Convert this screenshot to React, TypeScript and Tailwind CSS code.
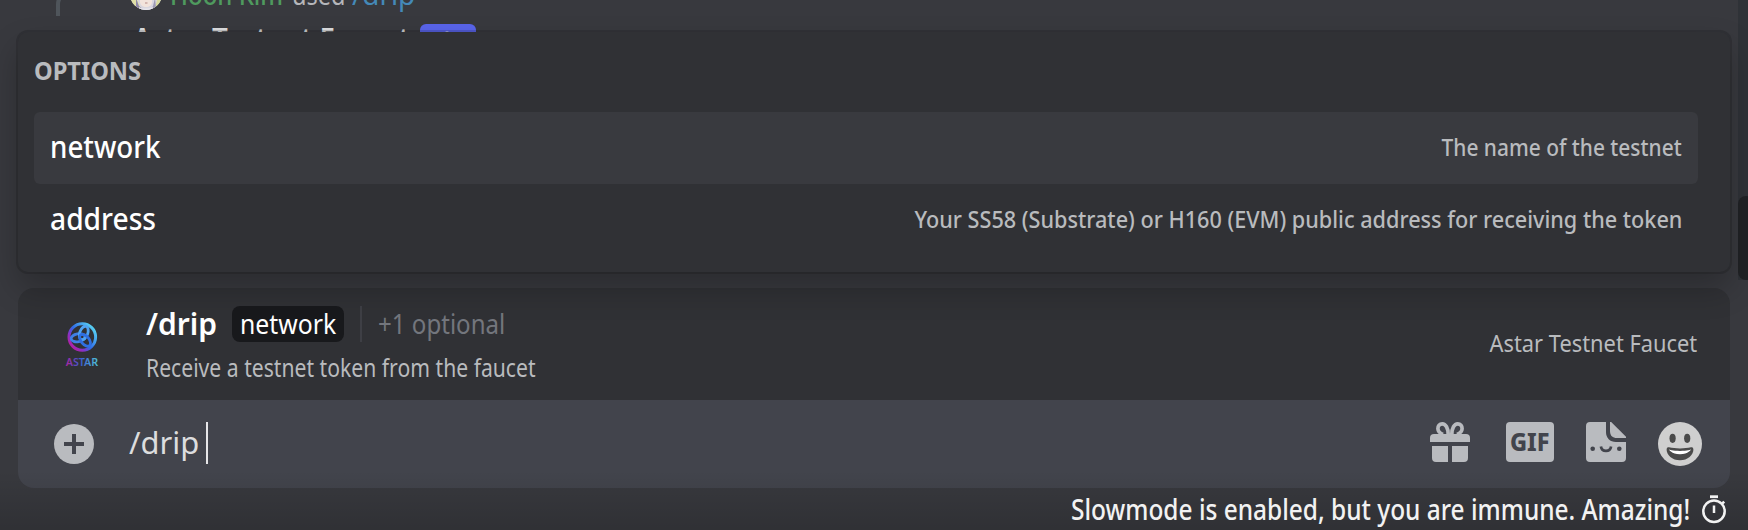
import type { ReactNode } from "react";

const options = [
  {
    name: "network",
    nameClass: "scale-x-[0.925]",
    description: "The name of the testnet",
    descriptionClass: "scale-x-[0.871]",
    active: true,
  },
  {
    name: "address",
    nameClass: "scale-x-[0.94]",
    description: "Your SS58 (Substrate) or H160 (EVM) public address for receiving the token",
    descriptionClass: "scale-x-[0.902]",
    active: false,
  },
];

function ReplyLine() {
  return (
    <div className="-mt-[22px] flex h-8 items-center pl-14">
      <div className="mt-[14px] h-6 w-[66px] shrink-0 self-start rounded-tl-xl border-l-4 border-t-4 border-[#4f555b]" />
      <svg className="ml-2 h-8 w-8 shrink-0" viewBox="0 0 32 32">
        <clipPath id="avatar">
          <circle cx="16" cy="16" r="16" />
        </clipPath>
        <g clipPath="url(#avatar)">
          <rect width="32" height="32" fill="#d9d6df" />
          <path d="M0 18h6l3 8 3 6H0z" fill="#e0e0a6" />
          <path d="M32 18h-4l-2 8-4 6h10z" fill="#d8da9c" />
          <path d="M6 20l3 8 5 4-8-1z" fill="#8d86a8" />
          <path d="M25 20l-2 8-3 4 6-2z" fill="#9c98b4" />
          <path d="M10 18h12v6c0 3-3 5-6 5s-6-2-6-5z" fill="#f3e4dc" />
          <path d="M15 25h2.500" stroke="#b78a86" strokeWidth="1" />
          <path d="M9 29c4 2 10 2 14 0v3H9z" fill="#e9e7ec" />
        </g>
      </svg>
      <div className="ml-2 w-[122px] shrink-0 pt-[3px]">
        <span className="inline-block origin-left scale-x-[0.89] text-[27px] font-medium text-[#4f9a5e]">Hoon Kim</span>
      </div>
      <div className="w-[60px] shrink-0 pt-[3px]">
        <span className="inline-block origin-left scale-x-[0.87] text-[27px] text-[#b5b6ba]">used</span>
      </div>
      <span className="inline-block origin-left scale-x-[1.03] pt-[3px] text-[27px] text-[#4489b8]">/drip</span>
    </div>
  );
}

function GiftIcon() {
  return (
    <svg className="h-10 w-10" viewBox="0 0 40 40" fill="#b9bbbf">
      <path d="M4 12h32a4 4 0 0 1 4 4v4H0v-4a4 4 0 0 1 4-4z" />
      <path d="M2 24h16v16H6a4 4 0 0 1-4-4zM22 24h16v12a4 4 0 0 1-4 4H22z" />
      <path
        d="M18.200 12.500C18.200 6 15.700 1.900 12.300 1.900C9.500 1.900 7.800 4 7.900 6.700C8 9.500 10 11.300 13 12.500M21.800 12.500C21.800 6 24.300 1.900 27.700 1.900C30.500 1.900 32.200 4 32.100 6.700C32 9.500 30 11.300 27 12.500"
        fill="none"
        stroke="#b9bbbf"
        strokeWidth="3.700"
      />
    </svg>
  );
}

function GifIcon() {
  return (
    <svg className="h-10 w-12" viewBox="0 0 48 40">
      <rect width="48" height="40" rx="4" fill="#b9bbbf" />
      <text
        x="4"
        y="28.700"
        textLength="39.500"
        lengthAdjust="spacingAndGlyphs"
        fontSize="24"
        fontWeight="800"
        fill="#42444c"
      >
        GIF
      </text>
    </svg>
  );
}

function StickerIcon() {
  return (
    <svg className="h-10 w-10" viewBox="0 0 40 40" fill="#b9bbbf">
      <path d="M4 0h16v10c0 6 4 10 10 10h10v16a4 4 0 0 1-4 4H4a4 4 0 0 1-4-4V4a4 4 0 0 1 4-4z" />
      <path d="M24 0h1.200L40 14.800V16H31c-4.500 0-7-2.500-7-7z" />
      <circle cx="6.700" cy="26.700" r="2.300" fill="#42444c" />
      <circle cx="33.300" cy="26.700" r="2.300" fill="#42444c" />
      <path d="M14.900 24.500c1 5.900 9.200 5.900 10.200 0" fill="none" stroke="#42444c" strokeWidth="2.700" />
    </svg>
  );
}

function SmileIcon() {
  return (
    <svg className="h-11 w-11" viewBox="0 0 44 44">
      <circle cx="22" cy="22" r="22" fill="#cfcfcf" />
      <ellipse cx="14.600" cy="16.300" rx="3.100" ry="4.600" fill="#4a4a4a" />
      <ellipse cx="29.200" cy="16.300" rx="3.100" ry="4.600" fill="#4a4a4a" />
      <path
        d="M22 26.500c-4.500 0-7.500-.5-11-1.200c-.9-.2-2.400 0-2.400 2.400c0 4.900 5.600 10.600 13.400 10.600s13.400-5.700 13.400-10.600c0-2.400-1.500-2.600-2.400-2.400c-3.500.7-6.500 1.200-11 1.200z"
        fill="#4a4a4a"
      />
      <path d="M11 27.500s3.700 1.400 11 1.400s11-1.400 11-1.400s-2.400 4.700-11 4.700s-11-4.700-11-4.700z" fill="#fff" />
    </svg>
  );
}

function TimerIcon() {
  return (
    <svg className="h-[30px] w-6 shrink-0" viewBox="0 0 24 30" fill="none" stroke="#f2f2f2">
      <circle cx="12" cy="16.300" r="10.700" strokeWidth="2.500" />
      <path d="M8 1.700h8" strokeWidth="2.800" />
      <path d="M12 10.500v7.500" strokeWidth="2.500" />
      <path d="M20.200 8.600l2-2" strokeWidth="2.600" />
    </svg>
  );
}

function AstarLogo() {
  return (
    <svg className="h-16 w-16 shrink-0" viewBox="0 0 64 64" fill="none">
      <defs>
        <linearGradient id="ring" x1="18" y1="38" x2="46" y2="14" gradientUnits="userSpaceOnUse">
          <stop offset="0" stopColor="#d0148c" />
          <stop offset="0.300" stopColor="#8a30c4" />
          <stop offset="0.500" stopColor="#2f6be6" />
          <stop offset="1" stopColor="#5fe3f5" />
        </linearGradient>
        <linearGradient id="word" x1="16" y1="0" x2="48" y2="0" gradientUnits="userSpaceOnUse">
          <stop offset="0" stopColor="#a8269f" />
          <stop offset="0.450" stopColor="#3a5bd0" />
          <stop offset="1" stopColor="#4fc3d8" />
        </linearGradient>
      </defs>
      <circle cx="32.300" cy="25" r="13.300" stroke="url(#ring)" strokeWidth="3" />
      <g strokeWidth="2.800">
        <ellipse cx="28" cy="25" rx="7" ry="4" transform="rotate(-10 32.300 25)" stroke="#3f7fe6" />
        <ellipse cx="28" cy="25" rx="7" ry="4" transform="rotate(110 32.300 25)" stroke="#4fa3f2" />
        <ellipse cx="28" cy="25" rx="7" ry="4" transform="rotate(230 32.300 25)" stroke="#2f6fe0" />
      </g>
      <text
        x="15.700"
        y="54.300"
        fontSize="11.500"
        fontWeight="600"
        textLength="32.500"
        lengthAdjust="spacingAndGlyphs"
        fill="url(#word)"
      >
        ASTAR
      </text>
    </svg>
  );
}

function Toolbar({ children }: { children: ReactNode }) {
  return <div className="ml-auto flex items-start">{children}</div>;
}

export default function App() {
  return (
    <div className="relative flex h-[530px] w-full overflow-hidden whitespace-nowrap bg-[#38393e] font-['Noto_Sans',sans-serif]">
      <main className="w-[1730px] shrink-0">
        <div className="h-8">
          <div className="flow-root h-full">
            <ReplyLine />
            <div className="mt-1 flex h-[50px] items-center pl-[133px]">
              <div className="w-[287px] pb-0.5">
                <span className="inline-block origin-left scale-x-[0.925] text-[30px] font-semibold text-[#dcdddf]">
                  Astar Testnet Faucet
                </span>
              </div>
              <div className="flex h-[30px] w-14 justify-center rounded-md bg-[#5964ea]">
                <div className="mr-0.5 mt-[7px] h-1 w-1 rounded-full bg-[#a9afef]" />
              </div>
            </div>
          </div>
        </div>

        <section className="relative z-10 ml-[18px] h-60 rounded-[10px] bg-[#303135] px-4 pt-[26px] shadow-[0_0_0_2px_rgba(4,4,5,0.15),0_16px_32px_rgba(0,0,0,0.24)]">
          <h2 className="h-[54px] leading-6">
            <span className="inline-block origin-left scale-x-[0.945] text-[25px] font-bold text-[#b9bbbe]">OPTIONS</span>
          </h2>
          <ul className="mr-4">
            {options.map((option) => (
              <li
                key={option.name}
                className={
                  option.active
                    ? "flex h-[72px] items-center justify-between rounded-md bg-[#393a3f] px-4 pb-[3px]"
                    : "flex h-[72px] items-center justify-between rounded-md px-4 pb-[3px]"
                }
              >
                <span className={"origin-left text-[30px] font-medium text-white " + option.nameClass}>{option.name}</span>
                <span className={"origin-right text-[24px] font-medium text-[#b9bbbe] " + option.descriptionClass}>
                  {option.description}
                </span>
              </li>
            ))}
          </ul>
        </section>

        <section className="ml-[18px] mt-4 overflow-hidden rounded-2xl">
          <div className="flex h-28 items-center bg-[#303135] pl-8 pr-[33px]">
            <AstarLogo />
            <div className="ml-8 h-[76px]">
              <div className="flex h-9 items-center">
                <div className="w-[86px]">
                  <span className="inline-block text-[30px] font-semibold leading-9 text-white">/drip</span>
                </div>
                <div className="flex h-9 w-28 items-center rounded-lg bg-[#18191c] pb-0.5 pl-2">
                  <span className="origin-left scale-x-[0.885] text-[28px] text-white">network</span>
                </div>
                <div className="ml-4 h-9 w-0.5 bg-[#3e3f45]" />
                <span className="ml-4 origin-left scale-x-[0.86] pb-0.5 text-[28px] text-[#73767d]">+1 optional</span>
              </div>
              <div className="mt-[11px] h-7 leading-7">
                <span className="inline-block origin-left scale-x-[0.846] text-[25px] text-[#b9bbbe]">
                  Receive a testnet token from the faucet
                </span>
              </div>
            </div>
            <span className="ml-auto origin-right scale-x-[0.91] pb-0.5 text-[24px] text-[#b9bbbe]">Astar Testnet Faucet</span>
          </div>
          <div className="flex h-[88px] bg-[#42444c] pl-9 pr-7 pt-[22px]">
            <svg className="mt-0.5 h-10 w-10 shrink-0" viewBox="0 0 40 40">
              <circle cx="20" cy="20" r="20" fill="#b9bbbf" />
              <path d="M20 10v20M10 20h20" stroke="#42444c" strokeWidth="4" />
            </svg>
            <div className="ml-[35px] flex">
              <div className="h-[42px] w-[77px]">
                <span className="inline-block origin-left scale-x-[1.03] text-[30px] leading-[42px] text-[#dcddde]">/drip</span>
              </div>
              <div className="h-[42px] w-0.5 bg-[#e6e6e8]" />
            </div>
            <Toolbar>
              <GiftIcon />
              <div className="ml-9">
                <GifIcon />
              </div>
              <div className="ml-8">
                <StickerIcon />
              </div>
              <div className="ml-8">
                <SmileIcon />
              </div>
            </Toolbar>
          </div>
        </section>

        <footer className="relative z-10 flex h-[42px] justify-end pr-1">
          <span className="origin-right scale-x-[0.873] text-[28px] font-medium leading-[43px] text-[#f2f2f2]">
            Slowmode is enabled, but you are immune. Amazing!
          </span>
          <div className="ml-3 pt-[7px]">
            <TimerIcon />
          </div>
        </footer>
      </main>

      <div className="ml-2 h-[280px] w-2.5 bg-[#2f3237] pt-[196px]">
        <div className="h-[84px] w-4 rounded-lg bg-[#202225]" />
      </div>

      <div className="pointer-events-none absolute inset-x-0 bottom-0 h-[60px] bg-gradient-to-b from-transparent to-black/15" />
    </div>
  );
}
